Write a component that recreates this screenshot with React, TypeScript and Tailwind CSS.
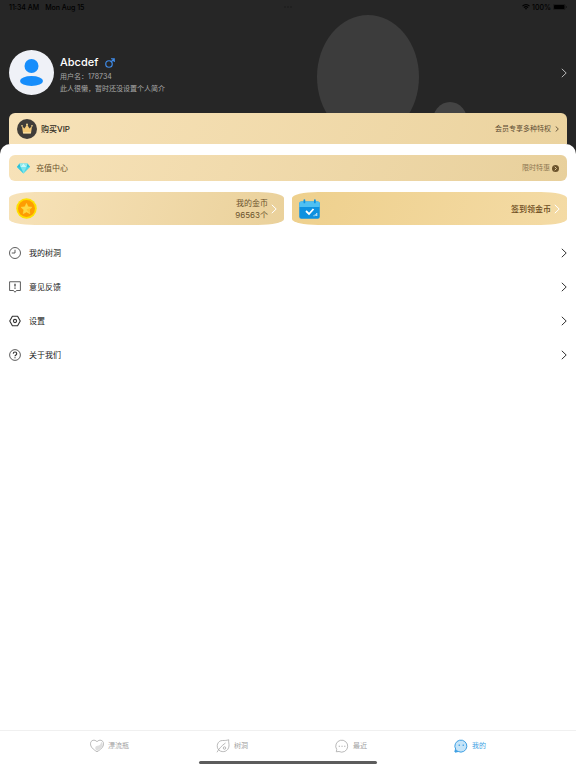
// src/App.tsx
// "Mine" tab: profile header, VIP + coins cards, settings menu, tab bar

import type { ReactNode } from 'react';

const ChevronRight = ({ className }: { className: string }) => (
  <svg viewBox="0 0 6 10" fill="none" stroke="currentColor" className={className} aria-hidden="true">
    <path d="M0.8 0.8 5.2 5 0.8 9.2" />
  </svg>
);

const StatusBar = () => (
  <div className="relative flex h-[14px] items-center justify-between px-[9px] text-[7px] leading-none font-medium text-black">
    <div className="flex gap-[6px]">
      <span>11:34 AM</span>
      <span>Mon Aug 15</span>
    </div>
    <div className="absolute left-1/2 flex -translate-x-1/2 gap-[1px]">
      <span className="size-[2px] rounded-full bg-[#1f1f1f]" />
      <span className="size-[2px] rounded-full bg-[#1f1f1f]" />
      <span className="size-[2px] rounded-full bg-[#1f1f1f]" />
    </div>
    <div className="flex items-center gap-[2px]">
      <svg viewBox="0 0 16 12" className="h-[6px] w-[8px]" fill="none" stroke="currentColor" strokeWidth="2.4" aria-hidden="true">
        <path d="M1 4.2a10 10 0 0 1 14 0" />
        <path d="M3.8 7.2a6 6 0 0 1 8.4 0" />
        <path d="M8 11.5 5.8 9.2a3.2 3.2 0 0 1 4.4 0z" fill="currentColor" stroke="none" />
      </svg>
      <span>100%</span>
      <svg viewBox="0 0 28 12" className="h-[6px] w-[14px]" aria-hidden="true">
        <rect x="0.5" y="0.5" width="24" height="11" rx="3" fill="none" stroke="#111" />
        <rect x="2" y="2" width="21" height="8" rx="1.6" />
        <path d="M26 4v4c1.6-.6 1.6-3.4 0-4z" />
      </svg>
    </div>
  </div>
);

const Avatar = () => (
  <svg viewBox="0 0 90 90" className="size-[45px] shrink-0" aria-hidden="true">
    <circle cx="45" cy="45" r="45" fill="#eff1f7" />
    <circle cx="45" cy="32" r="14" fill="#168dfb" />
    <ellipse cx="45" cy="62" rx="23" ry="10" fill="#168dfb" />
  </svg>
);

const Male = () => (
  <svg viewBox="0 0 20 20" className="size-[10px]" fill="none" stroke="#3f8be8" strokeWidth="2.4" aria-hidden="true">
    <circle cx="8" cy="12" r="6.5" />
    <path d="m12.5 7.5 5.5-5.5M12 1.5h6.5V8" />
  </svg>
);

const Crown = () => (
  <svg viewBox="0 0 40 40" className="size-[20px]" aria-hidden="true">
    <circle cx="20" cy="20" r="20" fill="#403d39" />
    <path d="m10 14 5 5 5-8 5 8 5-5-2 14.5H12z" fill="#f5cb78" />
    <circle cx="10" cy="13.5" r="1.7" fill="#f8dc97" />
    <circle cx="20" cy="11" r="1.9" fill="#f8dc97" />
    <circle cx="30" cy="13.5" r="1.7" fill="#f8dc97" />
    <path d="M12 26.5h16l-.4 2.5H12.4z" fill="#fbe3a8" />
  </svg>
);

const Diamond = () => (
  <svg viewBox="0 0 26 22" className="h-[11px] w-[13px]" aria-hidden="true">
    <path d="M5 1h16l5 7-13 13L0 8z" fill="#4fd6e4" />
    <path d="M5 1 0 8h7z" fill="#2fbfd6" />
    <path d="m21 1 5 7h-7z" fill="#35c5da" />
    <path d="M5 1h8L7 8zM21 1h-8l6 7z" fill="#8eebf0" />
    <path d="m13 1 6 7H7z" fill="#c9f8f8" />
    <path d="M7 8h12l-6 13z" fill="#7be6ee" />
    <path d="m0 8 13 13L7 8z" fill="#39c9de" />
  </svg>
);

const Coin = () => (
  <svg viewBox="0 0 42 42" className="size-[21px]" aria-hidden="true">
    <circle cx="21" cy="21" r="20.5" fill="#fde101" />
    <circle cx="21" cy="21" r="17" fill="#fe9d02" />
    <path
      d="m21 10.5 3.3 7 7.7 1-5.6 5.3 1.4 7.7-6.8-3.7-6.8 3.7 1.4-7.7L10 18.5l7.7-1z"
      fill="#fed843"
      stroke="#fed843"
      strokeLinejoin="round"
    />
    <path d="m21 23 11-4.5-5.6 5.3 1.4 7.7z" fill="#ffc629" />
  </svg>
);

const Calendar = () => (
  <svg viewBox="0 0 42 40" className="h-[20px] w-[21px]" aria-hidden="true">
    <rect x="0.5" y="5" width="41" height="34.5" rx="4" fill="#0d91e0" />
    <path d="M4.5 5h33a4 4 0 0 1 4 4v7H.5V9a4 4 0 0 1 4-4z" fill="#4fc0f3" />
    <rect x="9" y="0.5" width="3.5" height="8" rx="1.7" fill="#0d91e0" />
    <rect x="30" y="0.5" width="3.5" height="8" rx="1.7" fill="#0d91e0" />
    <path d="m14 24 6 6 9-10" fill="none" stroke="#fff" strokeWidth="3.6" />
    <path d="M29 33.5h2M32.5 33.5v-3M35.5 34v-6" stroke="#fff" strokeWidth="1.8" />
  </svg>
);

const MENU: { label: string; icon: ReactNode }[] = [
  {
    label: '我的树洞',
    icon: (
      <>
        <circle cx="12" cy="12" r="11" />
        <path d="M12 5.5V12H5.5" />
      </>
    ),
  },
  {
    label: '意见反馈',
    icon: (
      <>
        <path d="M1.2 1.5h21.6V19H15l-3 3.5L9 19H1.2z" strokeLinejoin="round" />
        <path d="M12 5.5V11M12 13v2.5" strokeWidth="2.4" />
      </>
    ),
  },
  {
    label: '设置',
    icon: (
      <>
        <path d="M6.8 2.5h10.4L22.5 12l-5.3 9.5H6.8L1.5 12z" strokeLinejoin="round" strokeWidth="2.2" />
        <circle cx="12" cy="12" r="3.2" strokeWidth="2.2" />
      </>
    ),
  },
  {
    label: '关于我们',
    icon: (
      <>
        <circle cx="12" cy="12" r="10.8" />
        <path d="M8.5 9.5c0-4.7 7-4.7 7 0 0 2.5-3.5 2.6-3.5 5M12 16.5v2.2" strokeWidth="2.2" />
      </>
    ),
  },
];

const TABS: { label: string; active?: boolean; icon: ReactNode }[] = [
  {
    label: '漂流瓶',
    icon: (
      <>
        <path d="M13 22c-4-3-3-9 2-9 4 0 7-3 7-8 5 3 4 9-1 13l-6.5 5z" fill="#dedede" stroke="none" />
        <path d="M14 25C6 20 1 15.5 1 9 1 1.5 9.5-.5 14 5c4.500-5.500 13-3.500 13 4 0 6.500-5 11-13 16z" />
      </>
    ),
  },
  {
    label: '树洞',
    icon: (
      <>
        <path d="M6 22C-1 15 3 2.5 13 2.5c5 0 8 0 12.5-1.5-1 4 1 8 .5 12.500C25 24 14 28 6 22z" />
        <path d="M2 26C6 19 11 13 19 7.5" />
        <circle cx="17" cy="17.5" r="2.5" />
      </>
    ),
  },
  {
    label: '最近',
    icon: (
      <>
        <path d="M3.5 20.5A12 12 0 1 1 8 24.5L2.5 25z" />
        <path d="M7.5 14h2.2M13 14h2.2M18.5 14h2.2" strokeWidth="2.4" />
      </>
    ),
  },
  {
    label: '我的',
    active: true,
    icon: (
      <>
        <path d="M3.5 20A12 12 0 1 1 8.5 24.5L2 25.5z" fill="#c5e4f8" strokeWidth="2" />
        <path d="M10.5 10.5v3M18.5 10.5v3" strokeWidth="2.4" />
        <path d="M2.5 20.5c2 1.8 3.5 2.8 6 3.8L2 25.5z" fill="currentColor" />
      </>
    ),
  },
];

export default function App() {
  return (
    <div className="flex min-h-screen flex-col bg-[#262626] font-[Inter,'Noto_Sans_CJK_SC',sans-serif]">
      {/* Profile header */}
      <header className="relative overflow-hidden bg-[#262626]">
        <svg className="absolute top-[15px] left-[55%] h-[130px] w-[152px]" viewBox="0 0 152 130" aria-hidden="true">
          <ellipse cx="51" cy="62" rx="51" ry="62" fill="#3c3c3c" />
          <ellipse cx="133" cy="108" rx="18" ry="21" fill="#444444" />
        </svg>
        <StatusBar />
        <button type="button" className="relative flex w-full items-center gap-[6px] px-[9px] pt-[36px] text-left">
          <Avatar />
          <span className="flex flex-1 flex-col pt-[4px]">
            <span className="flex items-center gap-[7px] text-[11px] leading-[17px] font-medium text-white">
              Abcdef
              <Male />
            </span>
            <span className="text-[7px] leading-[12px] text-[#a8a8a8]">用户名：178734</span>
            <span className="text-[7px] leading-[12px] text-[#a8a8a8]">此人很懒，暂时还没设置个人简介</span>
          </span>
          <ChevronRight className="h-[10px] w-[6px] text-[#b8b8b8]" />
        </button>
        <button
          type="button"
          className="relative mx-[9px] mt-[18px] flex h-[31px] w-[calc(100%-18px)] items-center rounded-t-[6px] bg-linear-[110deg] from-[#f7e2b8] to-[#ebd39f] px-[8px]"
        >
          <Crown />
          <span className="ml-[4px] text-[8px] leading-[12px] font-medium text-[#2f2a22]">购买VIP</span>
          <span className="ml-auto text-[7px] leading-[12px] text-[#5c4c33]">会员专享多种特权</span>
          <ChevronRight className="ml-[4px] h-[6px] w-[4px] stroke-[1.5] text-[#5c4c33]" />
        </button>
      </header>

      {/* White sheet */}
      <main className="flex-1 rounded-t-[10px] bg-white px-[9px] pt-[11px]">
        <button
          type="button"
          className="flex h-[26px] w-full items-center rounded-[6px] bg-linear-[110deg] from-[#f7e2b8] to-[#e8d09c] px-[8px]"
        >
          <Diamond />
          <span className="ml-[6px] text-[8px] leading-[12px] text-[#6b532c]">充值中心</span>
          <span className="ml-auto text-[7px] leading-[12px] text-[#8c7650]">限时特惠</span>
          <svg viewBox="0 0 14 14" className="ml-[2px] size-[7px]" aria-hidden="true">
            <circle cx="7" cy="7" r="7" fill="#6b532c" />
            <path d="M5.5 3.5 9 7l-3.5 3.5" fill="none" stroke="#ecd6a5" strokeWidth="1.8" />
          </svg>
        </button>

        <div className="mt-[11px] grid grid-cols-2 gap-[8px]">
          <button
            type="button"
            className="flex h-[33px] items-center rounded-[26px/6px] bg-linear-[110deg] from-[#f7e2b8] to-[#ead19b] px-[7px]"
          >
            <Coin />
            <span className="ml-auto text-right text-[8px] leading-[12px] text-[#6b532c]">
              我的金币
              <br />
              96563个
            </span>
            <ChevronRight className="ml-[3px] h-[10px] w-[6px] text-white" />
          </button>
          <button
            type="button"
            className="flex h-[33px] items-center rounded-[26px/6px] bg-linear-[110deg] from-[#eed08d] to-[#f4dba5] px-[7px]"
          >
            <Calendar />
            <span className="ml-auto text-[8px] leading-[12px] font-medium text-[#6b4a1c]">签到领金币</span>
            <ChevronRight className="ml-[3px] h-[10px] w-[6px] text-white" />
          </button>
        </div>

        <nav className="mt-[11px]">
          {MENU.map((item) => (
            <a key={item.label} href="#" className="flex h-[34px] items-center gap-[8px] text-[8px] leading-[12px] text-[#222222]">
              <svg viewBox="0 0 24 24" className="size-[12px]" fill="none" stroke="#333333" strokeWidth="1.6" aria-hidden="true">
                {item.icon}
              </svg>
              {item.label}
              <ChevronRight className="ml-auto h-[10px] w-[6px] text-[#333333]" />
            </a>
          ))}
        </nav>
      </main>

      {/* Tab bar */}
      <footer className="border-t border-[#f0f0f0] bg-white">
        <nav className="flex h-[30px] items-center justify-center gap-[87px]">
          {TABS.map((tab) => (
            <a
              key={tab.label}
              href="#"
              aria-current={tab.active ? 'page' : undefined}
              className={`flex items-center gap-[4px] text-[7px] leading-[12px] ${tab.active ? 'text-[#3d9fe3]' : 'text-[#a3a3a3]'}`}
            >
              <svg viewBox="0 0 28 27" className="h-[14px] w-[14px]" fill="none" stroke="currentColor" strokeWidth="1.5" aria-hidden="true">
                {tab.icon}
              </svg>
              {tab.label}
            </a>
          ))}
        </nav>
        <div className="mx-auto mb-[4px] h-[3px] w-[31%] rounded-full bg-[#5c5c5c]" />
      </footer>
    </div>
  );
}
